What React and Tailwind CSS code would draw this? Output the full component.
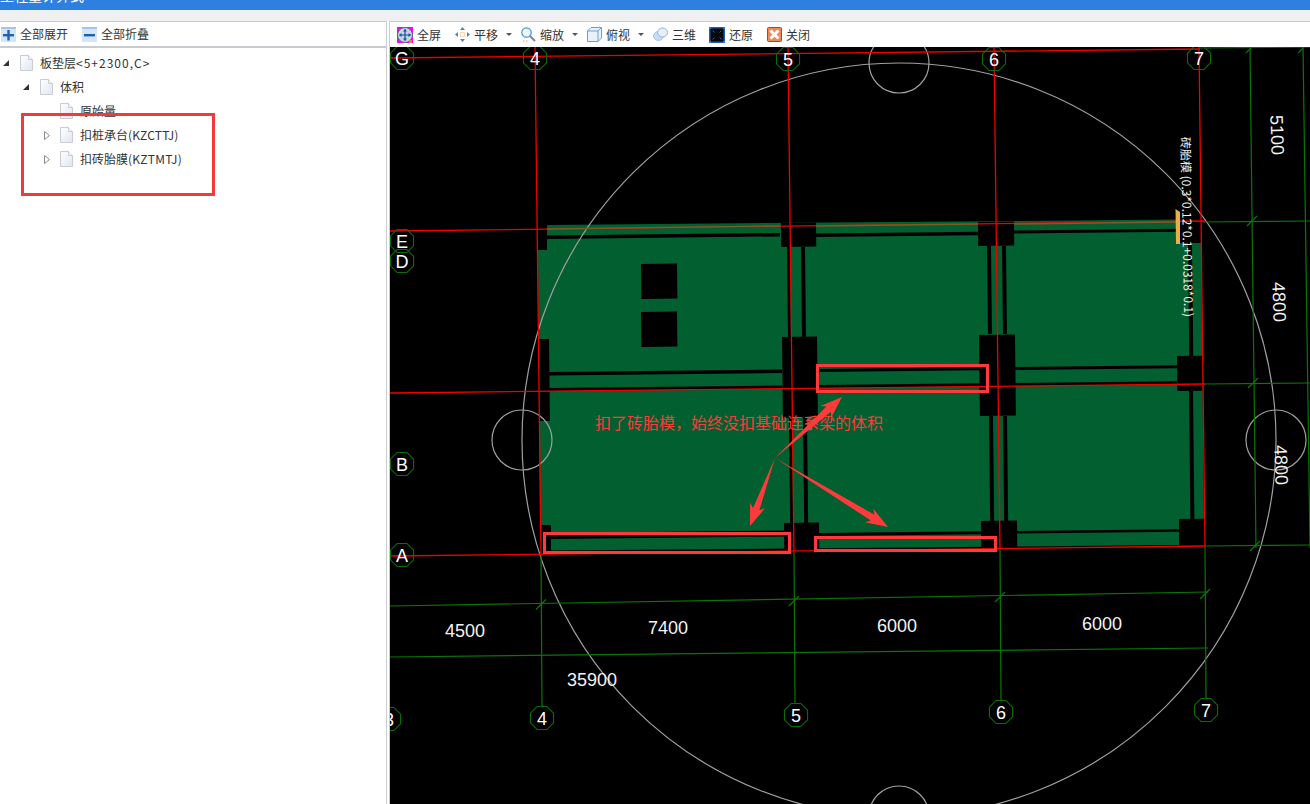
const FONT = "font-['Noto_Sans_CJK_SC','Liberation_Sans',sans-serif]";

function PlusIcon({ minus }) {
  return (
    <svg width="15" height="15" viewBox="0 0 15 15">
      <rect width="15" height="15" fill="#d4e5f9" />
      <rect width="15" height="2" fill="#a4c4e8" />
      <rect x="2" y="7" width="11" height="2.4" fill="#1c62ad" />
      {!minus && <rect x="6.3" y="3" width="2.4" height="10.5" fill="#1c62ad" />}
    </svg>
  );
}

function FileIcon() {
  return (
    <svg width="13" height="16" viewBox="0 0 13 16" className="shrink-0">
      <defs>
        <linearGradient id="page" x1="0" y1="0" x2="1" y2="1">
          <stop offset="0" stopColor="#ffffff" />
          <stop offset="1" stopColor="#dfe6f2" />
        </linearGradient>
      </defs>
      <path d="M0.5 0.5H8.5L12.5 4.5V15.5H0.5Z" fill="url(#page)" stroke="#c9ccd2" />
      <path d="M8.5 0.5V4.5H12.5" fill="#f4f6fa" stroke="#c9ccd2" />
    </svg>
  );
}

function TreeRow({ indent, arrow, label, extra, track = 'tracking-[1px]' }) {
  return (
    <div className={`flex h-6 items-center ${indent}`}>
      <span className="flex w-5 shrink-0 justify-start pl-[3px]">
        {arrow === 'open' && (
          <svg width="6" height="6" viewBox="0 0 6 6">
            <path d="M6 0V6H0Z" fill="#333" />
          </svg>
        )}
        {arrow === 'closed' && (
          <svg width="6" height="9" viewBox="0 0 6 9" className="ml-[1px]">
            <path d="M0.5 0.5L5.5 4.5L0.5 8.5Z" fill="#fff" stroke="#8a8a8a" />
          </svg>
        )}
      </span>
      <FileIcon />
      <span className="ml-[7px] whitespace-nowrap text-xs text-[#333]">
        {label}
        {extra && <span className={track}>{extra}</span>}
      </span>
    </div>
  );
}

const toolIcons = {
  full: (
    <svg width="16" height="16" viewBox="0 0 16 16">
      <rect width="16" height="16" fill="#f0f" />
      <circle cx="8" cy="8" r="7.5" fill="#c4d3e6" stroke="#57688a" />
      <path d="M8 2.5V13.5M2.5 8H13.5" stroke="#1f4f96" strokeWidth="1.2" />
      <path d="M8 2L6 4.5H10ZM8 14L6 11.5H10ZM2 8L4.5 6V10ZM14 8L11.5 6V10Z" fill="#1f4f96" />
      <rect x="12" y="13" width="3" height="3" fill="#d09030" />
    </svg>
  ),
  pan: (
    <svg width="15" height="15" viewBox="0 0 15 15">
      <path d="M7.5 0L10 3H5ZM7.5 15L5 12H10ZM0 7.5L3 5V10ZM15 7.5L12 10V5Z" fill="#3f86d6" />
      <rect x="5.5" y="5.5" width="4" height="4" fill="none" stroke="#eeb27a" strokeDasharray="1 1" />
    </svg>
  ),
  zoom: (
    <svg width="15" height="16" viewBox="0 0 15 16">
      <circle cx="5.5" cy="5.5" r="4.7" fill="#eef6ff" stroke="#4d93dc" strokeWidth="1.2" />
      <path d="M9 9L14 14" stroke="#8a8a8a" strokeWidth="2.2" />
      <path d="M2 14H3.5M5 14H6.5" stroke="#e8a850" />
    </svg>
  ),
  top: (
    <svg width="15" height="15" viewBox="0 0 15 15">
      <path d="M0.5 4L4 0.5H14.5V11L11 14.5H0.5Z" fill="#e9f2fc" stroke="#6a9fdc" />
      <path d="M0.5 4H11V14.5M11 4L14.5 0.5" fill="none" stroke="#6a9fdc" />
    </svg>
  ),
  three: (
    <svg width="15" height="15" viewBox="0 0 15 15">
      <ellipse cx="5.5" cy="9" rx="5" ry="4.5" fill="#c9dcf2" stroke="#a9c4e4" />
      <ellipse cx="9.5" cy="5.5" rx="5" ry="4.5" fill="#e4effa" stroke="#8fb4dd" />
    </svg>
  ),
  restore: (
    <svg width="16" height="16" viewBox="0 0 16 16">
      <rect x="0.75" y="0.75" width="14.5" height="14.5" fill="#05070c" stroke="#1c5fb0" strokeWidth="1.5" />
      <path d="M3.5 3.5L5.5 5.5M12.5 3.5L10.5 5.5M3.5 12.5L5.5 10.5M12.5 12.5L10.5 10.5" stroke="#1c5fb0" />
      <rect width="2" height="2" fill="#2a78d0" />
      <rect x="14" width="2" height="2" fill="#2a78d0" />
      <rect y="14" width="2" height="2" fill="#2a78d0" />
      <rect x="14" y="14" width="2" height="2" fill="#2a78d0" />
    </svg>
  ),
  close: (
    <svg width="15" height="15" viewBox="0 0 15 15">
      <rect x="0.5" y="0.5" width="14" height="14" rx="1" fill="#e98a5c" stroke="#8e5230" />
      <path d="M3.5 3.5L11.5 11.5M11.5 3.5L3.5 11.5" stroke="#fff" strokeWidth="3" />
    </svg>
  ),
};

function Caret() {
  return (
    <svg width="6" height="3" viewBox="0 0 6 3" className="ml-2">
      <path d="M0 0H6L3 3Z" fill="#555" />
    </svg>
  );
}

const tools = [
  { icon: 'full', label: '全屏', cls: 'ml-[7px]' },
  { icon: 'pan', label: '平移', cls: 'ml-[14px]', caret: true },
  { icon: 'zoom', label: '缩放', cls: 'ml-[9px]', caret: true },
  { icon: 'top', label: '俯视', cls: 'ml-[9px]', caret: true },
  { icon: 'three', label: '三维', cls: 'ml-[9px]' },
  { icon: 'restore', label: '还原', cls: 'ml-[13px]' },
  { icon: 'close', label: '关闭', cls: 'ml-[14px]' },
];

// slightly skewed rectangle, the drawing is rotated a little
function Box({ x0, x1, y0, y1, fill = '#000' }) {
  const t = (x1 - x0) * 0.011;
  const s = (y1 - y0) * 0.011;
  return (
    <polygon
      points={`${x0},${y0} ${x1},${y0 - t} ${x1 + s},${y1 - t} ${x0 + s},${y1}`}
      fill={fill}
    />
  );
}

const blacks = [
  // horizontal beams
  { x0: 547, x1: 780, y0: 235.5, y1: 239 },
  { x0: 816, x1: 978, y0: 233.5, y1: 237 },
  { x0: 1014, x1: 1177, y0: 230.5, y1: 233.5 },
  { x0: 549, x1: 782, y0: 372, y1: 375.5 },
  { x0: 549, x1: 782, y0: 388, y1: 391 },
  { x0: 817, x1: 980, y0: 369, y1: 372 },
  { x0: 817, x1: 980, y0: 385, y1: 388 },
  { x0: 1015, x1: 1177, y0: 367, y1: 370 },
  { x0: 1015, x1: 1177, y0: 383, y1: 386 },
  { x0: 551, x1: 784, y0: 533, y1: 539 },
  { x0: 819, x1: 981, y0: 533, y1: 536 },
  { x0: 1017, x1: 1179, y0: 531, y1: 533.5 },
  // thin vertical walls
  { x0: 787, x1: 790, y0: 247, y1: 337 },
  { x0: 801, x1: 805, y0: 247, y1: 337 },
  { x0: 789, x1: 792, y0: 417, y1: 523 },
  { x0: 803, x1: 807, y0: 417, y1: 523 },
  { x0: 987, x1: 991, y0: 246, y1: 334 },
  { x0: 1002, x1: 1006, y0: 246, y1: 334 },
  { x0: 989, x1: 993, y0: 416, y1: 521 },
  { x0: 1003, x1: 1007, y0: 416, y1: 521 },
  { x0: 1188, x1: 1192, y0: 243, y1: 356 },
  { x0: 1189, x1: 1193, y0: 391, y1: 519 },
  // columns
  { x0: 781, x1: 816, y0: 223, y1: 247 },
  { x0: 782, x1: 817, y0: 337, y1: 418 },
  { x0: 784, x1: 819, y0: 523, y1: 551 },
  { x0: 978, x1: 1014, y0: 222, y1: 246 },
  { x0: 979, x1: 1015, y0: 335, y1: 416 },
  { x0: 981, x1: 1017, y0: 521, y1: 548 },
  { x0: 1177, x1: 1202, y0: 356, y1: 391 },
  { x0: 1179, x1: 1204, y0: 519, y1: 545 },
  { x0: 538, x1: 549, y0: 339, y1: 421 },
  // holes
  { x0: 641, x1: 677, y0: 264, y1: 299 },
  { x0: 641, x1: 677, y0: 312, y1: 347 },
];

const redLines = [
  [390, 58, 1200, 49],
  [390, 231, 1205, 221],
  [390, 393, 1205, 384],
  [390, 556, 1205, 546],
  [535, 47, 541, 555],
  [788, 47, 794, 553],
  [994, 47, 1000, 548],
  [1199, 47, 1205, 546],
];

const greenLines = [
  [541, 555, 542, 706],
  [794, 553, 795, 703],
  [1000, 548, 1001, 700],
  [1205, 546, 1206, 698],
  [390, 606, 1208, 592],
  [390, 657, 1208, 648],
  [1250, 47, 1256, 548],
  [1303, 47, 1310, 548],
  [1200, 48, 1310, 47],
  [1203, 222, 1310, 221],
  [1204, 384, 1310, 383],
  [1205, 546, 1310, 545],
];

const ticks = [
  [541, 604.5], [794, 601], [1000, 597], [1205, 594], [1252, 221], [1253, 383], [1255, 546], [1251, 48], [1303, 48],
];

const axes = [
  ['G', 402, 58], ['4', 535, 58], ['5', 788, 59], ['6', 994, 59], ['7', 1199, 58],
  ['E', 402, 241], ['D', 402, 261], ['B', 402, 464], ['A', 402, 555],
  ['4', 542, 718], ['5', 796, 715], ['6', 1001, 712], ['7', 1206, 710], ['3', 389, 719],
];

const dims = [
  ['4500', 465, 637], ['7400', 668, 634], ['6000', 897, 632], ['6000', 1102, 630], ['35900', 592, 686],
];

const sideDims = [
  ['5100', 1277, 135], ['4800', 1279, 302], ['4800', 1281, 465],
];

const octagon = (cx, cy, r = 12.5) =>
  Array.from({ length: 8 }, (_, i) => {
    const a = (Math.PI / 4) * i + Math.PI / 8;
    return `${cx + r * Math.cos(a)},${cy + r * Math.sin(a)}`;
  }).join(' ');

// tapered arrow, from a point at the tail to the tip
const arrow = (x0, y0, x1, y1) => {
  const len = Math.hypot(x1 - x0, y1 - y0);
  const ux = (x1 - x0) / len;
  const uy = (y1 - y0) / len;
  const at = (d, w) => `${x0 + ux * d - uy * w},${y0 + uy * d + ux * w}`;
  const neck = len - 18;
  return [at(0, 0), at(neck, 3.4), at(neck - 4, 8), at(len, 0), at(neck - 4, -8), at(neck, -3.4)].join(' ');
};

function Drawing() {
  return (
    <svg viewBox="390 47 920 757" className="block h-full w-full bg-black">
      <polygon
        points="547,225 1177,219.5 1177,243 1201,243 1204,519 1179,519 1179,545 551,550.5 551,525 540,525 538,250 547,250"
        fill="#025f30"
      />
      {blacks.map((b, i) => (
        <Box key={i} {...b} />
      ))}

      <g fill="none" stroke="#a0a0a0" strokeWidth="1.2">
        <circle cx="899" cy="440" r="377" />
        <circle cx="899" cy="63" r="30" />
        <circle cx="522" cy="440" r="30" />
        <circle cx="1276" cy="440" r="30" />
        <circle cx="899" cy="816" r="30" />
      </g>

      <g stroke="#0a7606" strokeWidth="1.2">
        {greenLines.map(([x1, y1, x2, y2], i) => (
          <line key={i} x1={x1} y1={y1} x2={x2} y2={y2} />
        ))}
        {ticks.map(([x, y], i) => (
          <line key={i} x1={x - 5} y1={y + 5} x2={x + 5} y2={y - 5} />
        ))}
      </g>

      <g stroke="#f00000" strokeWidth="1.3">
        {redLines.map(([x1, y1, x2, y2], i) => (
          <line key={i} x1={x1} y1={y1} x2={x2} y2={y2} />
        ))}
      </g>
      {/* the E grid line turns dull where it crosses the plate */}
      <g stroke="#7d5a28" strokeWidth="1.3">
        <line x1="547" y1="229" x2="780" y2="226" />
        <line x1="816" y1="226" x2="978" y2="224" />
        <line x1="1014" y1="224" x2="1176" y2="222" />
      </g>

      <polygon points="1175.5,209 1180,212 1180,244 1176,244" fill="#e6b045" />

      {axes.map(([t, x, y], i) => (
        <g key={i}>
          <polygon points={octagon(x, y)} fill="none" stroke="#0a6e06" strokeWidth="1.1" />
          <text x={x} y={y + 6.5} textAnchor="middle" fontSize="18" fill="#fff" fontFamily="Liberation Sans, sans-serif">
            {t}
          </text>
        </g>
      ))}

      <g fill="#f4f4f4" fontSize="18" fontFamily="Liberation Sans, sans-serif">
        {dims.map(([t, x, y], i) => (
          <text key={i} x={x} y={y} textAnchor="middle">
            {t}
          </text>
        ))}
        {sideDims.map(([t, x, y], i) => (
          <text key={i} x={x} y={y} textAnchor="middle" transform={`rotate(88 ${x} ${y})`} dy="6">
            {t}
          </text>
        ))}
      </g>

      <text
        x="1181"
        y="137"
        fontSize="12"
        fill="#eef2ee"
        fontFamily="Noto Sans CJK SC, Liberation Sans, sans-serif"
        transform="rotate(89 1181 137)"
      >
        砖胎模 (0.3*0.12*0.1+0.0318*0.1)
      </text>

      <text x="595" y="429" fontSize="16" fill="#ff3a3a" fontFamily="Noto Sans CJK SC, sans-serif">
        扣了砖胎模，始终没扣基础连系梁的体积
      </text>

      <g fill="none" stroke="#ff3a3a" strokeWidth="3">
        <rect x="817.5" y="365.5" width="170" height="26" />
        <rect x="544.5" y="533.5" width="245" height="19" />
        <rect x="815.5" y="537.5" width="180" height="13" />
      </g>
      <g fill="#ff3a3a">
        <polygon points={arrow(775, 458, 842, 397)} />
        <polygon points={arrow(775, 458, 750, 526)} />
        <polygon points={arrow(775, 458, 888, 527)} />
      </g>
    </svg>
  );
}

export default function App() {
  return (
    <div className={`flex h-screen w-[1310px] flex-col overflow-hidden bg-white ${FONT}`}>
      <div className="h-[10px] shrink-0 overflow-hidden bg-[#2d7fe0]">
        <div className="-mt-[13px] whitespace-nowrap text-sm leading-4 text-white">工程量计算式</div>
      </div>
      <div className="h-[11px] shrink-0 bg-[#f0f0f0]" />

      <div className="flex min-h-0 flex-1">
        {/* left tree */}
        <div className="relative flex w-[387px] shrink-0 flex-col border-t border-r border-[#c9cdd1]">
          <div className="flex h-[26px] shrink-0 items-center border-b-2 border-[#c8ccd0] pl-[1px] text-xs text-[#333]">
            <PlusIcon />
            <span className="ml-1">全部展开</span>
            <span className="ml-[14px]">
              <PlusIcon minus />
            </span>
            <span className="ml-1">全部折叠</span>
          </div>
          <div className="pt-[3px]">
            <TreeRow indent="pl-0" arrow="open" label="板垫层" extra="<5+2300,C>" />
            <TreeRow indent="pl-5" arrow="open" label="体积" />
            <TreeRow indent="pl-10" label="原始量" />
            <TreeRow indent="pl-10" arrow="closed" label="扣桩承台" extra="(KZCTTJ)" track="tracking-[0.15px]" />
            <TreeRow indent="pl-10" arrow="closed" label="扣砖胎膜" extra="(KZTMTJ)" track="tracking-[0.25px]" />
          </div>
          {/* annotation painted over the tree */}
          <div className="absolute top-[91px] left-[21px] h-[83px] w-[194px] border-[3px] border-[#f23a3a]" />
        </div>

        {/* drawing side */}
        <div className="ml-[2px] flex min-w-0 flex-1 flex-col border-t border-l border-[#c9cdd1]">
          <div className="flex h-[25px] shrink-0 items-center text-xs text-[#333]">
            {tools.map((t) => (
              <div key={t.label} className={`flex items-center ${t.cls}`}>
                {toolIcons[t.icon]}
                <span className="ml-1">{t.label}</span>
                {t.caret && <Caret />}
              </div>
            ))}
          </div>
          <div className="min-h-0 flex-1">
            <Drawing />
          </div>
        </div>
      </div>
    </div>
  );
}
